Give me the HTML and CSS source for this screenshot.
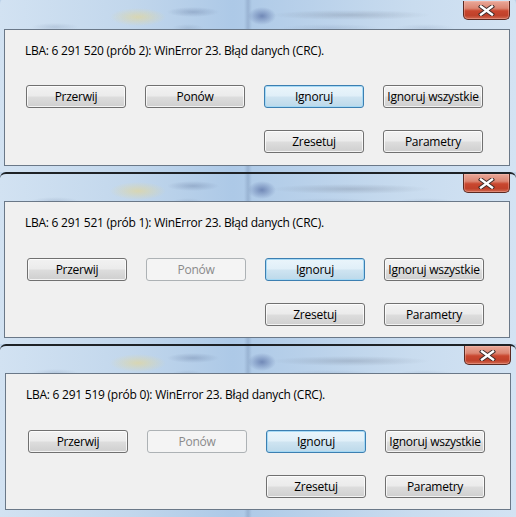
FILE: index.html
```html
<!DOCTYPE html>
<html lang="pl">
<head>
<meta charset="utf-8">
<title>WinError 23</title>
<link rel="stylesheet" href="styles.css">
</head>
<body>
<div class="stack">
  <section class="dialog first">
    <div class="titlebar">
      <button class="close" aria-label="Zamknij"><svg width="17" height="11" viewBox="0 0 17 11"><path d="M3 1.5 L14 9.5 M14 1.5 L3 9.5" stroke="#3a2a28" stroke-width="4.2" stroke-linecap="square" fill="none"/><path d="M3 1.5 L14 9.5 M14 1.5 L3 9.5" stroke="#ffffff" stroke-width="2.4" stroke-linecap="square" fill="none"/></svg></button>
    </div>
    <div class="panel">
      <p class="msg">LBA: 6 291 520 (prób 2): WinError 23. Błąd danych (CRC).</p>
      <div class="buttons">
        <button class="btn">Przerwij</button>
        <button class="btn">Ponów</button>
        <button class="btn default">Ignoruj</button>
        <button class="btn">Ignoruj wszystkie</button>
        <button class="btn col3">Zresetuj</button>
        <button class="btn">Parametry</button>
      </div>
    </div>
  </section>
  <section class="dialog second">
    <div class="titlebar">
      <button class="close" aria-label="Zamknij"><svg width="17" height="11" viewBox="0 0 17 11"><path d="M3 1.5 L14 9.5 M14 1.5 L3 9.5" stroke="#3a2a28" stroke-width="4.2" stroke-linecap="square" fill="none"/><path d="M3 1.5 L14 9.5 M14 1.5 L3 9.5" stroke="#ffffff" stroke-width="2.4" stroke-linecap="square" fill="none"/></svg></button>
    </div>
    <div class="panel">
      <p class="msg">LBA: 6 291 521 (prób 1): WinError 23. Błąd danych (CRC).</p>
      <div class="buttons">
        <button class="btn">Przerwij</button>
        <button class="btn" disabled>Ponów</button>
        <button class="btn default">Ignoruj</button>
        <button class="btn">Ignoruj wszystkie</button>
        <button class="btn col3">Zresetuj</button>
        <button class="btn">Parametry</button>
      </div>
    </div>
  </section>
  <section class="dialog third">
    <div class="titlebar">
      <button class="close" aria-label="Zamknij"><svg width="17" height="11" viewBox="0 0 17 11"><path d="M3 1.5 L14 9.5 M14 1.5 L3 9.5" stroke="#3a2a28" stroke-width="4.2" stroke-linecap="square" fill="none"/><path d="M3 1.5 L14 9.5 M14 1.5 L3 9.5" stroke="#ffffff" stroke-width="2.4" stroke-linecap="square" fill="none"/></svg></button>
    </div>
    <div class="panel">
      <p class="msg">LBA: 6 291 519 (prób 0): WinError 23. Błąd danych (CRC).</p>
      <div class="buttons">
        <button class="btn">Przerwij</button>
        <button class="btn" disabled>Ponów</button>
        <button class="btn default">Ignoruj</button>
        <button class="btn">Ignoruj wszystkie</button>
        <button class="btn col3">Zresetuj</button>
        <button class="btn">Parametry</button>
      </div>
    </div>
  </section>
</div>
</body>
</html>
```
FILE: styles.css
```css
* { box-sizing: border-box; }
html, body { margin: 0; padding: 0; }
body {
  width: 516px;
  height: 517px;
  overflow: hidden;
  background: #bdd3ea;
  font-family: "Open Sans", "Noto Sans", sans-serif;
  font-size: 12px;
  color: #000;
}
.stack { display: flex; flex-direction: column; }

.dialog {
  height: 172px;
  padding: 0 6px 0 4px;
  border-top: 2px solid #1e2226;
  border-radius: 6px 6px 0 0;
  display: flex;
  flex-direction: column;
  background-color: #c2d7ec;
  background-image:
    radial-gradient(ellipse 28px 9px at 138px 17px, rgba(224,214,160,0.75), rgba(224,214,160,0) 100%),
    radial-gradient(ellipse 14px 9px at 262px 16px, rgba(70,92,150,0.6), rgba(70,92,150,0) 100%),
    radial-gradient(ellipse 26px 5px at 193px 12px, rgba(80,100,140,0.3), rgba(80,100,140,0) 100%),
    radial-gradient(ellipse 80px 5px at 350px 15px, rgba(100,110,130,0.28), rgba(100,110,130,0) 100%),
    radial-gradient(ellipse 24px 4px at 55px 27px, rgba(120,140,170,0.25), rgba(120,140,170,0) 100%),
    radial-gradient(ellipse 16px 4px at 188px 28px, rgba(120,140,170,0.25), rgba(120,140,170,0) 100%),
    radial-gradient(ellipse 50px 4px at 330px 28px, rgba(120,140,170,0.22), rgba(120,140,170,0) 100%),
    radial-gradient(ellipse 30px 4px at 425px 28px, rgba(120,140,170,0.2), rgba(120,140,170,0) 100%),
    linear-gradient(to right, rgba(120,145,180,0) 244px, rgba(120,145,180,0.4) 248px, rgba(120,145,180,0) 252px),
    linear-gradient(to right, #d2e2f2 0, #c2d7ec 25%, #adc9e7 45%, #b9d1ea 60%, #c9dcef 80%, #d3e3f3 100%);
}
.dialog.first { border-top-color: transparent; margin-top: -2px; height: 174px; }
.dialog.second { height: 172px; }
.dialog.third { height: 173px; padding-left: 5px; padding-right: 5px; }

.titlebar {
  height: 27px;
  flex: none;
  display: flex;
  justify-content: flex-end;
  align-items: flex-start;
}
.dialog.first .titlebar { height: 29px; padding-top: 1px; }

.close {
  width: 47px;
  height: 19px;
  margin: 0;
  padding: 0;
  border: 1px solid #5b2a22;
  border-top: none;
  border-radius: 0 0 5px 5px;
  background: linear-gradient(to bottom, #e9a899 0, #dc8672 40%, #c9472f 55%, #c0412a 80%, #d06a52 100%);
  box-shadow: inset 0 0 0 1px rgba(255,200,190,0.35);
  display: flex;
  align-items: center;
  justify-content: center;
}
.close svg { display: block; }

.panel {
  height: 137px;
  flex: none;
  border: 1px solid #6a7888;
  background: #f0f0f0;
  padding: 13px 0 0 20px;
}
.msg {
  margin: 0;
  line-height: 16px;
  height: 16px;
  white-space: nowrap;
  letter-spacing: -0.25px;
}
.buttons {
  margin-top: 26px;
  margin-left: 1px;
  display: grid;
  grid-template-columns: repeat(4, 100px);
  column-gap: 19px;
  row-gap: 22px;
}
.dialog.second .buttons, .dialog.third .buttons { margin-left: 2px; margin-top: 27px; }
.btn {
  height: 23px;
  margin: 0;
  padding: 0;
  font: inherit;
  letter-spacing: -0.25px;
  color: #000;
  border: 1px solid #707070;
  border-radius: 3px;
  background: linear-gradient(to bottom, #f2f2f2 0, #ebebeb 48%, #dddddd 52%, #cfcfcf 100%);
  box-shadow: inset 0 0 0 1px rgba(255,255,255,0.75);
  white-space: nowrap;
  text-align: center;
  line-height: 21px;
}
.btn.col3 { grid-column: 3; }
.btn.default {
  border-color: #3c7fb1;
  background: linear-gradient(to bottom, #eaf5fb 0, #e0eff8 48%, #cfe4f1 52%, #bcd9ea 100%);
  box-shadow: inset 0 0 0 1px rgba(160,215,245,0.9);
}
.btn:disabled {
  color: #8a8a8a;
  border-color: #adb2b5;
  background: #f4f4f4;
  box-shadow: none;
}
```
